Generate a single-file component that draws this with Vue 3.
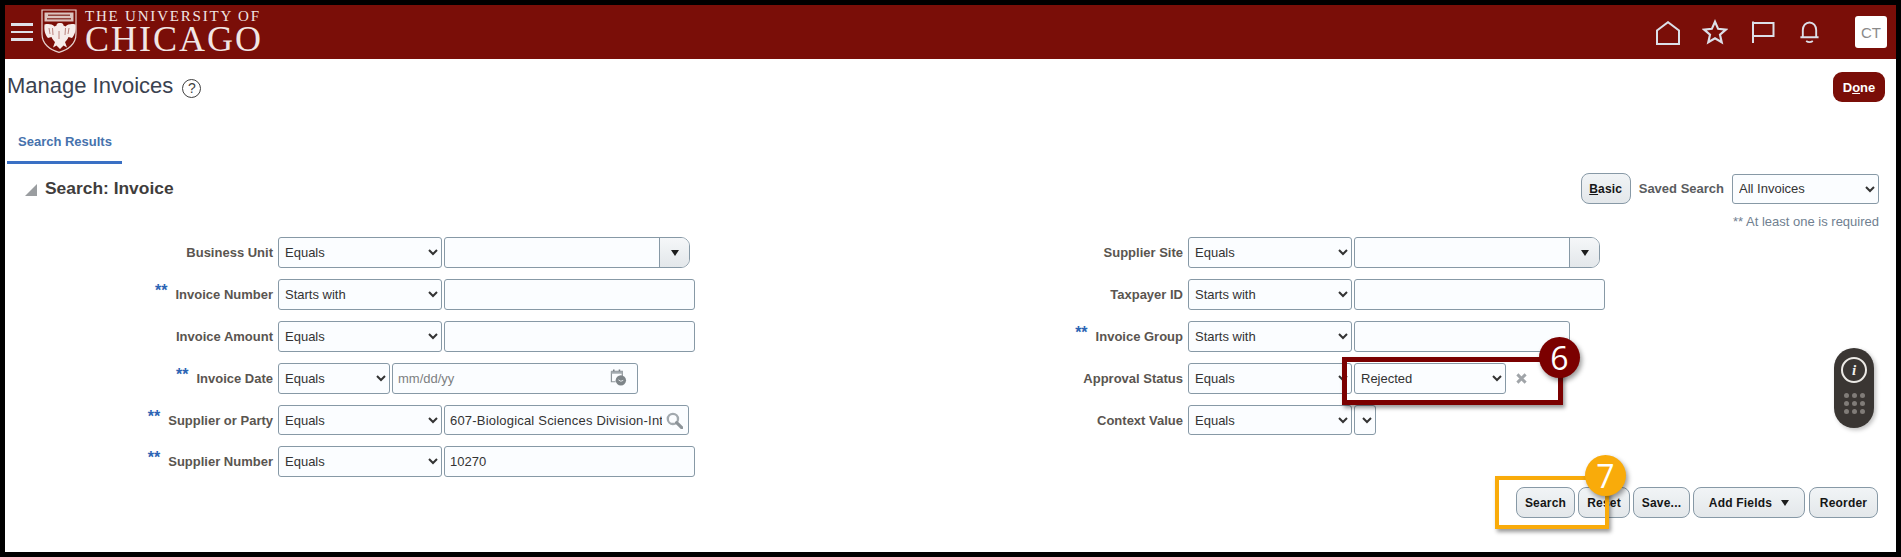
<script setup>
const leftRows = [
  { label: 'Business Unit', op: 'Equals', kind: 'combo' },
  { label: 'Invoice Number', op: 'Starts with', kind: 'text', req: true },
  { label: 'Invoice Amount', op: 'Equals', kind: 'text' },
  { label: 'Invoice Date', op: 'Equals', kind: 'date', req: true },
  { label: 'Supplier or Party', op: 'Equals', kind: 'search', req: true, value: '607-Biological Sciences Division-Intl', short: true },
  { label: 'Supplier Number', op: 'Equals', kind: 'text', req: true, value: '10270' },
]
const rightRows = [
  { label: 'Supplier Site', op: 'Equals', kind: 'combo' },
  { label: 'Taxpayer ID', op: 'Starts with', kind: 'text' },
  { label: 'Invoice Group', op: 'Starts with', kind: 'group', req: true },
  { label: 'Approval Status', op: 'Equals', kind: 'status' },
  { label: 'Context Value', op: 'Equals', kind: 'context', short: true },
]
const buttons = [
  { text: 'Search', width: '59px' },
  { text: 'Reset', width: '52px' },
  { text: 'Save...', width: '57px' },
]
const dots = 9
</script>

<template>
  <div class="frame">
    <header class="topbar">
      <button class="burger" aria-label="Menu"><i></i><i></i><i></i></button>
      <svg class="crest" viewBox="0 0 36 44" aria-hidden="true">
        <path d="M1 1H35V25C35 35 27 41 18 43.300C9 41 1 35 1 25Z" fill="#7a0e08" stroke="#e6d2cf" stroke-width="1.200"/>
        <path d="M3.500 3.500H32.500V12.500H3.500Z" fill="#dcc3bf"/>
        <path d="M7 5.500h22v1.500H7zM6 9h24v1.500H6z" fill="#94443e"/>
        <path d="M18 14c-1.500 0-2.500 1-2.500 2.500l-2 1C11 15 7.500 14.500 3.500 15.500c-.5 6 .5 10 3.500 13.500l3.500-1c1 2.500 2.500 4 3.500 5l-2 5.500 3.500-2 3.500 3.500 3.500-3.500 3.500 2-2-5.500c1-1 2.500-2.500 3.500-5l3.500 1c3-3.500 4-7.500 3.500-13.500-4-1-7.500-.5-10 2l-2-1c0-1.500-1-2.500-2.500-2.500Z" fill="#f6ecea"/>
        <path d="M8 19l1 6M11.500 19l.5 7M28 19l-1 6M24.500 19l-.5 7M18 22v8" stroke="#b27670" stroke-width=".9"/>
      </svg>
      <div class="wordmark">
        <span class="wm-top">THE UNIVERSITY OF</span>
        <span class="wm-main">CHICAGO</span>
      </div>
      <nav class="top-icons">
        <svg class="ic home" viewBox="0 0 24 24"><path d="M1 23V9.500L12 1.200 23 9.500V23Z"/></svg>
        <svg class="ic star" viewBox="0 0 24 24"><path d="M12 2.500l2.900 6.600 7.100.7-5.400 4.700 1.600 7-6.200-3.700-6.200 3.700 1.600-7L2 9.800l7.100-.7Z"/></svg>
        <svg class="ic flag" viewBox="0 0 24 24"><path d="M2 1.500V23M2 3H22.500V16H2"/></svg>
        <svg class="ic bell" viewBox="0 0 22 24"><path d="M1.500 17.500H20.500M4 17.500V10C4 5.500 7 2 11 2s7 3.500 7 8V17.500M7.500 21.500c2 1.300 5 1.300 7 0"/></svg>
        <div class="avatar">CT</div>
      </nav>
    </header>

    <main class="page">
      <div class="title-row">
        <h1>Manage Invoices</h1>
        <span class="help">?</span>
        <button class="done">D<u>o</u>ne</button>
      </div>

      <div class="tabs"><span class="tab">Search Results</span></div>

      <section class="panel">
        <div class="panel-head">
          <svg class="tri" viewBox="0 0 12 12"><polygon points="12,0 12,12 0,12" /></svg>
          <h2>Search: Invoice</h2>
          <div class="saved">
            <button class="btn basic"><u>B</u>asic</button>
            <label>Saved Search</label>
            <select class="sel saved-sel"><option>All Invoices</option></select>
          </div>
        </div>
        <p class="note">** At least one is required</p>

        <div class="form">
          <div class="col col-left">
            <div v-for="r in leftRows" :key="r.label" class="row" :class="{ short: r.short }">
              <div class="lab"><span v-if="r.req" class="req">**</span>{{ r.label }}</div>
              <select class="sel" :class="r.kind === 'date' ? 'w-date' : 'w-op'"><option>{{ r.op }}</option></select>

              <div v-if="r.kind === 'combo'" class="combo w-combo"><span class="combo-btn"><b></b></span></div>
              <input v-else-if="r.kind === 'text'" class="inp w-inp" :value="r.value || ''" />
              <div v-else-if="r.kind === 'date'" class="field w-datein">
                <input class="bare muted" value="mm/dd/yy" />
                <svg class="cal" viewBox="0 0 18 18">
                  <path d="M1.500 2.500H13V8M1.500 2.500V13.500H6" fill="none" stroke="#8d9499" stroke-width="1.300"/>
                  <path d="M4 .5v3.500M10 .5v3.500" stroke="#777e83" stroke-width="1.600"/>
                  <path d="M1.500 2.500H13V5H1.500Z" fill="#a4abb0"/>
                  <circle cx="11.500" cy="12" r="5.500" fill="#7e8589"/>
                  <path d="M9 11.500l2.500 1.500 2.500-1" stroke="#e8ecee" stroke-width="1" fill="none"/>
                </svg>
              </div>
              <div v-else class="field w-search">
                <input class="bare spaced" :value="r.value" />
                <svg class="mag" viewBox="0 0 16 16">
                  <circle cx="6.500" cy="6.500" r="4.800" fill="none" stroke="#a2a9ae" stroke-width="2.200"/>
                  <path d="M10 10l4.800 4.800" stroke="#8d9499" stroke-width="3" stroke-linecap="round"/>
                </svg>
              </div>
            </div>
          </div>

          <div class="col col-right">
            <div v-for="r in rightRows" :key="r.label" class="row" :class="{ short: r.short }">
              <div class="lab"><span v-if="r.req" class="req">**</span>{{ r.label }}</div>
              <select class="sel w-op"><option>{{ r.op }}</option></select>

              <div v-if="r.kind === 'combo'" class="combo w-combo"><span class="combo-btn"><b></b></span></div>
              <input v-else-if="r.kind === 'text'" class="inp w-inp" />
              <input v-else-if="r.kind === 'group'" class="inp w-grp" />
              <template v-else-if="r.kind === 'status'">
                <select class="sel w-status"><option>Rejected</option></select>
                <svg class="clear" viewBox="0 0 12 12"><path d="M1.500 1.500l9 9M10.500 1.500l-9 9" stroke="#a0a4a8" stroke-width="3.200"/></svg>
              </template>
              <select v-else class="sel w-ctx"><option></option></select>
            </div>
          </div>
        </div>

        <div class="actions">
          <button v-for="b in buttons" :key="b.text" class="btn" :style="{ width: b.width }">{{ b.text }}</button>
          <button class="btn add">Add Fields<b></b></button>
          <button class="btn reorder">Reorder</button>
        </div>
      </section>
    </main>

    <div class="callout box6"></div>
    <div class="badge b6">6</div>
    <div class="callout box7"></div>
    <div class="badge b7">7</div>

    <aside class="widget">
      <span class="info">i</span>
      <div class="keys"><i v-for="n in dots" :key="n"></i></div>
    </aside>
  </div>
</template>

<style scoped>
* { box-sizing: border-box; }
.frame {
  position: relative;
  width: 1901px;
  height: 557px;
  border: 5px solid #000;
  background: #fff;
  overflow: hidden;
  font-family: "Liberation Sans", Arial, sans-serif;
  font-size: 13px;
  color: #4b4640;
}
button { font-family: inherit; cursor: default; }

.topbar {
  height: 54px;
  background: #7a0e08;
  display: flex;
  align-items: center;
}
.burger {
  width: 22px;
  margin-left: 6px;
  padding: 0;
  background: none;
  border: 0;
  display: flex;
  flex-direction: column;
  gap: 5px;
}
.burger i { display: block; height: 2.500px; background: #dfe1ea; }
.crest { width: 36px; height: 44px; margin-left: 8px; margin-top: -2px; flex: none; }
.wordmark {
  margin-left: 8px;
  display: flex;
  flex-direction: column;
  font-family: "Liberation Serif", serif;
  color: #f1e6e4;
  margin-top: -2px;
}
.wm-top { font-size: 15px; letter-spacing: 1.800px; line-height: 17px; white-space: nowrap; }
.wm-main { font-size: 36px; letter-spacing: 2px; line-height: 29px; white-space: nowrap; }
.top-icons { margin-left: auto; display: flex; align-items: center; padding-right: 9px; }
.ic { fill: none; stroke: #dcdfe8; stroke-width: 2; display: block; }
.home { width: 24px; height: 24px; margin-top: 2px; }
.star { width: 26px; height: 26px; margin-left: 22px; }
.flag { width: 24px; height: 24px; margin-left: 23px; }
.bell { width: 21px; height: 24px; margin-left: 24px; }
.avatar {
  width: 32px;
  height: 32px;
  margin-left: 35px;
  background: #fff;
  border-radius: 3px;
  color: #8a8a8a;
  font-size: 15px;
  display: flex;
  align-items: center;
  justify-content: center;
}

.title-row {
  display: flex;
  align-items: center;
  height: 30px;
  margin-top: 13px;
  padding: 0 11px 0 2px;
}
h1 { margin: 0 0 2px; font-size: 22px; font-weight: 400; color: #3a4250; }
.help {
  width: 19px;
  height: 19px;
  margin-left: 9px;
  margin-top: 2px;
  border: 1.200px solid #3f3f3f;
  border-radius: 50%;
  font-size: 14px;
  color: #3f3f3f;
  display: flex;
  align-items: center;
  justify-content: center;
}
.done {
  margin-left: auto;
  width: 52px;
  height: 30px;
  border: 0;
  border-radius: 9px;
  background: #7a0e08;
  color: #fff;
  font-size: 13px;
  font-weight: 700;
  padding: 0;
}
.tabs { height: 62px; display: flex; align-items: flex-end; padding-left: 2px; }
.tab {
  width: 115px;
  height: 35px;
  padding: 5px 0 0 11px;
  border-bottom: 3px solid #3a70c4;
  color: #4672ad;
  font-size: 13px;
  font-weight: 700;
}
.panel { padding-top: 9px; }
.panel-head { display: flex; align-items: center; height: 31px; padding: 0 17px 0 20px; }
.tri { width: 12px; height: 12px; fill: #9a9da0; margin-top: 2px; }
h2 { margin: 0 0 0 8px; font-size: 17.400px; font-weight: 700; color: #3f3d3c; }
.saved { margin-left: auto; display: flex; align-items: center; }
.saved label { margin: 0 8px; font-weight: 700; color: #5a5c60; }
.note { margin: 11px 17px 0 0; height: 13px; line-height: 13px; text-align: right; font-size: 13px; color: #708090; }

.form { display: grid; grid-template-columns: 1008px 1fr; margin-top: 9px; }
.col { display: flex; flex-direction: column; gap: 11px; }
.row { display: flex; align-items: center; height: 31px; gap: 2px; }
.row.short { height: 30px; }
.lab { text-align: right; font-weight: 700; margin-right: 3px; white-space: nowrap; color: #5a5550; }
.col-left .lab { width: 268px; }
.col-right .lab { width: 170px; }
.req {
  color: #2c64b4;
  font-size: 16px;
  line-height: 0;
  margin-right: 8px;
  position: relative;
  top: -3px;
}
.sel, .inp, .field, .combo {
  height: 100%;
  background: #fbfdff;
  border: 1px solid #8799a6;
  border-radius: 3px;
  font-family: inherit;
  font-size: 13px;
  color: #333;
  flex: none;
}
.sel { padding: 0 0 0 2px; }
.inp { padding: 0 5px; outline: 0; }
.w-op { width: 164px; }
.w-date { width: 112px; }
.w-inp { width: 251px; }
.w-combo { width: 246px; }
.w-datein { width: 246px; }
.w-search { width: 245px; }
.w-grp { width: 216px; }
.w-status { width: 152px; }
.w-ctx { width: 22px; padding: 0; }
.saved-sel { width: 147px; height: 30px; }
.combo { display: flex; justify-content: flex-end; border-radius: 3px 9px 9px 3px; overflow: hidden; }
.combo-btn {
  width: 30px;
  border-left: 1px solid #8799a6;
  background: linear-gradient(#f5f7f9, #e3e7ea);
  display: flex;
  align-items: center;
  justify-content: center;
}
.combo-btn b, .add b {
  width: 0;
  height: 0;
  border-left: 4.500px solid transparent;
  border-right: 4.500px solid transparent;
  border-top: 6px solid #1c1c1c;
}
.field { display: flex; align-items: center; padding: 0 5px 0 5px; }
.bare {
  flex: 1;
  min-width: 0;
  height: 100%;
  border: 0;
  outline: 0;
  padding: 0;
  background: transparent;
  font: inherit;
  color: inherit;
}
.spaced { letter-spacing: .2px; }
.muted { color: #7d7f81; }
.cal { width: 17px; height: 17px; margin: -3px 5px 0 4px; flex: none; }
.mag { width: 17px; height: 17px; margin-left: 4px; flex: none; }
.clear { width: 11px; height: 11px; margin-left: 8px; }

.btn {
  height: 31px;
  padding: 0;
  background: linear-gradient(#f1f4f6, #e3e7ea);
  border: 1px solid #8799a6;
  border-radius: 8px;
  color: #161616;
  font-size: 12px;
  font-weight: 700;
  letter-spacing: .2px;
}
.basic { width: 50px; }
.actions { display: flex; justify-content: flex-end; gap: 3px; padding-right: 18px; margin-top: 10px; }
.add { width: 112px; display: flex; align-items: center; justify-content: center; gap: 9px; }
.reorder { width: 69px; margin-left: 1px; }

.callout { position: absolute; box-shadow: 2px 3px 4px rgba(0,0,0,.4); }
.box6 { left: 1337px; top: 352px; width: 221px; height: 48px; border: 5px solid #7b0000; }
.box7 { left: 1490px; top: 471px; width: 114px; height: 53px; border: 4px solid #f9ab0a; }
.badge {
  position: absolute;
  display: flex;
  align-items: center;
  justify-content: center;
  border-radius: 50%;
  color: #fff;
  font-family: "Open Sans", sans-serif;
  font-size: 32px;
  box-shadow: 2px 3px 5px rgba(0,0,0,.4);
}
.b6 { left: 1534px; top: 332px; width: 41px; height: 41px; background: #7b0000; }
.b7 { left: 1580px; top: 450px; width: 41px; height: 41px; background: #f9ab0a; }

.widget {
  position: absolute;
  left: 1829px;
  top: 343px;
  width: 40px;
  height: 80px;
  border-radius: 20px;
  background: #3a3633;
  box-shadow: 2px 2px 4px rgba(0,0,0,.25);
  display: flex;
  flex-direction: column;
  align-items: center;
  padding-top: 9px;
}
.info {
  width: 26px;
  height: 26px;
  border: 2px solid #eceae6;
  border-radius: 50%;
  color: #f2f0ec;
  font: italic 700 15px/22px "Liberation Serif", serif;
  text-align: center;
}
.keys { display: grid; grid-template-columns: repeat(3, 5px); gap: 3px; margin-top: 10px; }
.keys i { width: 5px; height: 5px; border-radius: 50%; background: #807c78; }
</style>
